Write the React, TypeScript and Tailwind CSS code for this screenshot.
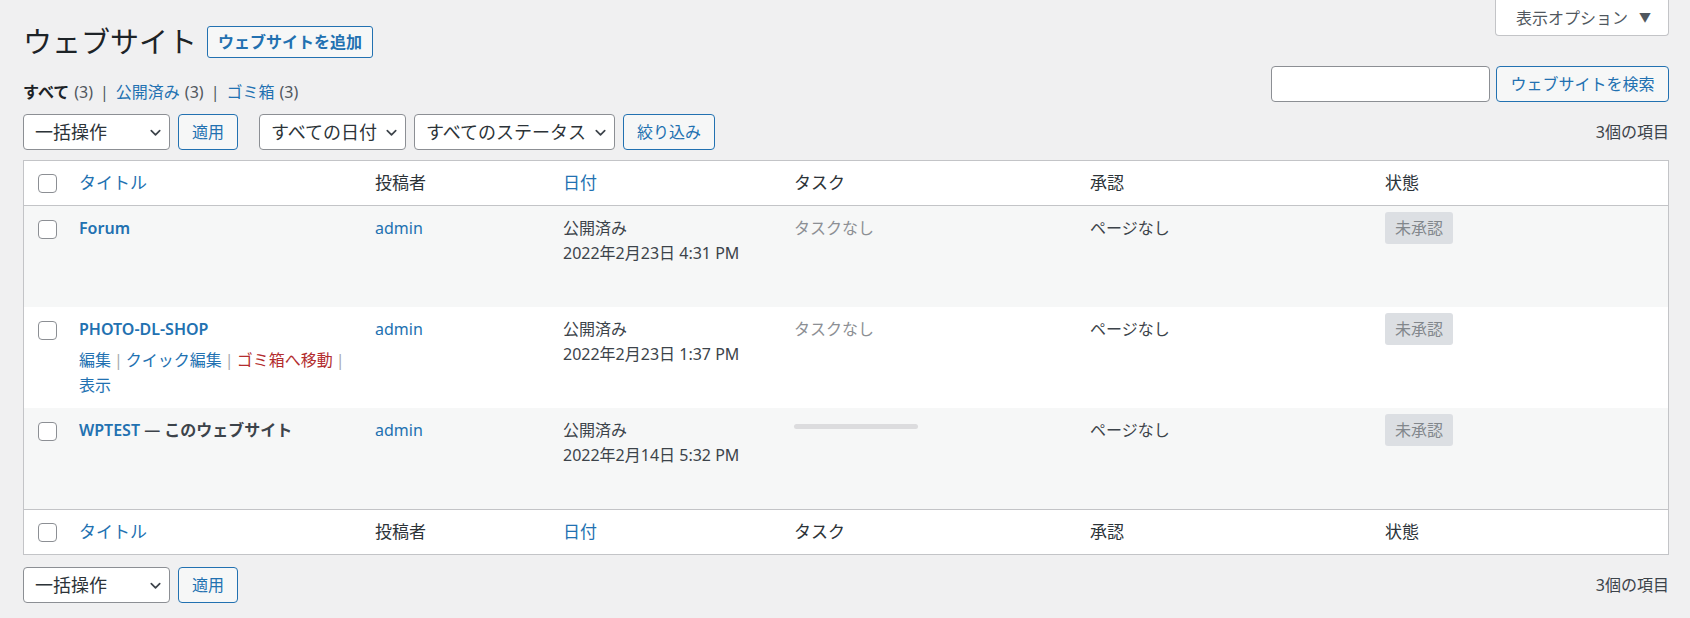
import React from "react"

const cols = "grid grid-cols-[55px_296px_188px_231px_296px_295px_1fr]"

function Chevron() {
  return (
    <svg width="15" height="15" viewBox="0 0 16 16" fill="none" className="shrink-0">
      <path d="M3.5 6l4.5 4.5L12.5 6" stroke="#3c434a" strokeWidth="1.8" strokeLinecap="round" strokeLinejoin="round" />
    </svg>
  )
}

function Select({ label, className }: { label: string; className: string }) {
  return (
    <div
      className={`${className} h-[36px] flex items-center justify-between pl-[11px] pr-[6px] bg-white border border-[#8c8f94] rounded-[4px] text-[18px] text-[#2c3338]`}
    >
      <span>{label}</span>
      <Chevron />
    </div>
  )
}

function Btn({ label, className = "" }: { label: string; className?: string }) {
  return (
    <div
      className={`${className} h-[36px] flex items-center justify-center border border-[#2271b1] rounded-[4px] bg-[#f6f7f7] text-[#2271b1] text-[16px]`}
    >
      {label}
    </div>
  )
}

function Checkbox() {
  return <div className="w-[19px] h-[19px] border border-[#8c8f94] rounded-[4px] bg-white" />
}

function Badge() {
  return (
    <div className="mt-[6px] w-[68px] h-[32px] flex items-center justify-center rounded-[3px] bg-[#dcdfe3] text-[16px] text-[#82878c]">
      未承認
    </div>
  )
}

function HeadRow({ border }: { border: string }) {
  return (
    <div className={`${cols} h-[45px] items-center ${border} border-[#c3c4c7] text-[17px] text-[#2c3338]`}>
      <div className="pl-[14px]">
        <Checkbox />
      </div>
      <div className="text-[#2271b1]">タイトル</div>
      <div>投稿者</div>
      <div className="text-[#2271b1]">日付</div>
      <div>タスク</div>
      <div>承認</div>
      <div>状態</div>
    </div>
  )
}

function Sep() {
  return <span className="mx-[3px] text-[#a7aaad]">|</span>
}

type Site = {
  title: React.ReactNode
  date: string
  task: "none" | "bar"
  actions?: boolean
  bg: string
}

const sites: Site[] = [
  { title: <span className="text-[#2271b1]">Forum</span>, date: "2022年2月23日 4:31 PM", task: "none", bg: "bg-[#f6f7f7]" },
  {
    title: <span className="text-[#2271b1]">PHOTO-DL-SHOP</span>,
    date: "2022年2月23日 1:37 PM",
    task: "none",
    actions: true,
    bg: "bg-white",
  },
  {
    title: (
      <>
        <span className="text-[#2271b1]">WPTEST</span>
        <span className="text-[#3c434a]"> — このウェブサイト</span>
      </>
    ),
    date: "2022年2月14日 5:32 PM",
    task: "bar",
    bg: "bg-[#f6f7f7]",
  },
]

export default function App() {
  return (
    <div className="min-h-screen bg-[#f0f0f1] pl-[23px] pr-[21px] font-['Noto_Sans','Noto_Sans_CJK_JP',sans-serif] text-[#3c434a]">
      {/* title line */}
      <div className="flex items-start justify-between">
        <div className="mt-[26px] flex items-center">
          <h1 className="text-[29px] leading-[32px] font-normal text-[#1d2327]">ウェブサイト</h1>
          <div className="ml-[10px] h-[32px] px-[10px] flex items-center border border-[#2271b1] rounded-[3px] bg-[#f6f7f7] text-[#2271b1] text-[16px] font-semibold">
            ウェブサイトを追加
          </div>
        </div>
        <div className="w-[174px] h-[36px] flex items-center justify-between pl-[20px] pr-[17px] bg-white border border-t-0 border-[#c3c4c7] rounded-b-[4px] text-[16px] text-[#50575e]">
          <span>表示オプション</span>
          <span className="text-[12px]">▼</span>
        </div>
      </div>

      {/* views + search */}
      <div className="mt-[8px] flex items-start justify-between">
        <div className="mt-[16px] flex items-center gap-[5px] text-[16px] leading-[20px]">
          <span className="font-bold text-[#1d2327]">すべて</span>
          <span className="text-[#50575e]">(3)</span>
          <span className="mx-[2px] text-[#50575e]">|</span>
          <span className="text-[#2271b1]">公開済み</span>
          <span className="text-[#50575e]">(3)</span>
          <span className="mx-[2px] text-[#50575e]">|</span>
          <span className="text-[#2271b1]">ゴミ箱</span>
          <span className="text-[#50575e]">(3)</span>
        </div>
        <div className="flex items-center gap-[6px]">
          <div className="w-[219px] h-[36px] bg-white border border-[#8c8f94] rounded-[4px]" />
          <Btn label="ウェブサイトを検索" className="w-[173px]" />
        </div>
      </div>

      {/* top tablenav */}
      <div className="mt-[12px] flex items-center justify-between">
        <div className="flex items-center">
          <Select label="一括操作" className="w-[147px]" />
          <Btn label="適用" className="ml-[8px] w-[60px]" />
          <Select label="すべての日付" className="ml-[21px] w-[147px]" />
          <Select label="すべてのステータス" className="ml-[8px] w-[201px]" />
          <Btn label="絞り込み" className="ml-[8px] w-[92px]" />
        </div>
        <span className="text-[16px] text-[#3c434a]">3個の項目</span>
      </div>

      {/* table */}
      <div className="mt-[10px] border border-[#c3c4c7] bg-white">
        <HeadRow border="border-b" />
        {sites.map((s, i) => (
          <div key={i} className={`${cols} h-[101px] items-start ${s.bg} text-[16px] leading-[25px]`}>
            <div className="pl-[14px] pt-[14px]">
              <Checkbox />
            </div>
            <div className="pt-[10px]">
              <div className="font-semibold">{s.title}</div>
              {s.actions && (
                <div className="mt-[6px] text-[#2271b1]">
                  <div>
                    編集
                    <Sep />
                    クイック編集
                    <Sep />
                    <span className="text-[#b32d2e]">ゴミ箱へ移動</span>
                    <Sep />
                  </div>
                  <div>表示</div>
                </div>
              )}
            </div>
            <div className="pt-[10px] text-[#2271b1]">admin</div>
            <div className="pt-[10px]">
              <div>公開済み</div>
              <div>{s.date}</div>
            </div>
            <div className="pt-[10px]">
              {s.task === "none" ? (
                <span className="text-[#8c8f94]">タスクなし</span>
              ) : (
                <div className="mt-[6px] w-[124px] h-[5px] rounded-full bg-[#dcdcde]" />
              )}
            </div>
            <div className="pt-[10px]">ページなし</div>
            <div>
              <Badge />
            </div>
          </div>
        ))}
        <HeadRow border="border-t" />
      </div>

      {/* bottom tablenav */}
      <div className="mt-[12px] flex items-center justify-between">
        <div className="flex items-center">
          <Select label="一括操作" className="w-[147px]" />
          <Btn label="適用" className="ml-[8px] w-[60px]" />
        </div>
        <span className="text-[16px] text-[#3c434a]">3個の項目</span>
      </div>
    </div>
  )
}
